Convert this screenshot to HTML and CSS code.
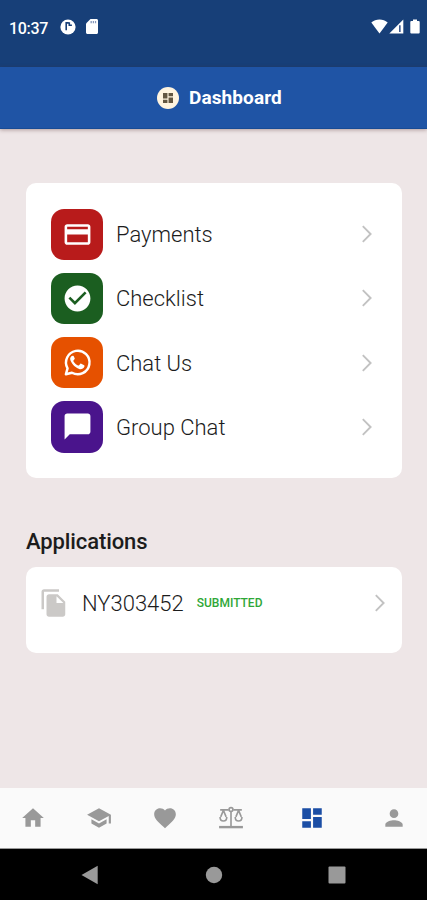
FILE: index.html
```html
<!DOCTYPE html>
<html lang="en">
<head>
<meta charset="utf-8">
<title>Dashboard</title>
<link rel="stylesheet" href="styles.css">
</head>
<body>
<div class="status">
  <span class="time">10:37</span>
  <svg class="st-app" viewBox="0 0 16 16"><circle cx="8" cy="8" r="7.6" fill="#fff"/><path d="M6.200 3.300v8M9.300 3.300v3.700M5.400 3.900h3.200M9.300 6.200h2.600" fill="none" stroke="#173f78" stroke-width="1.600"/></svg>
  <svg class="st-sd" viewBox="4 2 16 20"><path fill="#fff" d="M18 2h-8L4 8v12c0 1.100.9 2 2 2h12c1.100 0 2-.9 2-2V4c0-1.100-.9-2-2-2z"/><path fill="#8698bb" d="M10 4.500h1.800v3H10zM13 4.500h1.800v3H13zM16 4.500h1.500v3H16z"/></svg>
  <span class="spacer"></span>
  <svg class="st-wifi" viewBox="0 0 17 15"><path fill="#fff" d="M.3 3.600C4.800-.6 12.200-.6 16.700 3.600L8.500 14.600z"/></svg>
  <svg class="st-cell" viewBox="0 0 15 15"><path fill="#fff" d="M.3 14.500 14.300.500v14z"/><path fill="#2a4b86" d="M10.100 6.300h1.500v6.700h-1.500z"/></svg>
  <svg class="st-bat" viewBox="0 0 10 15"><path fill="#fff" d="M3 .5h4v1.400h1.700q1 0 1 1v10.600q0 1-1 1H1.300q-1 0-1-1V2.900q0-1 1-1H3z"/></svg>
</div>
<header class="appbar">
  <span class="logo"><svg viewBox="3 3 18 18"><path d="M3 13h8V3H3v10zm0 8h8v-6H3v6zm10 0h8V11h-8v10zm0-18v6h8V3h-8z"/></svg></span>
  <h1>Dashboard</h1>
</header>
<main>
  <section class="card menu">
    <a class="row"><span class="tile red"><svg viewBox="0 0 24 24"><path d="M20 4H4c-1.110 0-1.990.89-1.990 2L2 18c0 1.110.89 2 2 2h16c1.110 0 2-.89 2-2V6c0-1.110-.89-2-2-2zm0 14H4v-6h16v6zm0-10H4V6h16v2z"/></svg></span><span class="label">Payments</span><svg class="chev" viewBox="0 0 10 18"><path d="M.8 1.200 8.600 9 .8 16.800"/></svg></a>
    <a class="row"><span class="tile green"><svg viewBox="0 0 24 24"><path d="M12 2C6.480 2 2 6.480 2 12s4.480 10 10 10 10-4.480 10-10S17.520 2 12 2zm-2 15-5-5 1.410-1.410L10 14.170l7.590-7.590L19 8l-9 9z"/></svg></span><span class="label">Checklist</span><svg class="chev" viewBox="0 0 10 18"><path d="M.8 1.200 8.600 9 .8 16.800"/></svg></a>
    <a class="row"><span class="tile orange"><svg viewBox="0 0 24 24"><path fill="none" stroke="#fff" stroke-width="1.900" stroke-linejoin="round" d="M3 21.100 4.300 16.500A9.100 9.100 0 1 1 7.700 19.900z"/><path d="M9.100 7.200c-.2-.5-.5-.5-.8-.5-.5 0-.9.200-1.200.6-.6.600-.9 1.400-.7 2.400.4 2.400 3.500 6.300 6.900 7.300 1.600.5 3.500-.3 4-1.700.2-.5.200-1-.1-1.200l-2.300-1.200c-.3-.1-.6-.1-.8.200l-.9 1.100c-.2.200-.5.200-.8.100-1.500-.6-2.800-1.800-3.600-3.300-.1-.3 0-.5.200-.7l.8-1c.1-.2.100-.4 0-.6z"/></svg></span><span class="label">Chat Us</span><svg class="chev" viewBox="0 0 10 18"><path d="M.8 1.200 8.600 9 .8 16.800"/></svg></a>
    <a class="row"><span class="tile purple"><svg viewBox="0 0 24 24"><path d="M20 2H4c-1.100 0-2 .9-2 2v18l4-4h14c1.100 0 2-.9 2-2V4c0-1.100-.9-2-2-2z"/></svg></span><span class="label">Group Chat</span><svg class="chev" viewBox="0 0 10 18"><path d="M.8 1.200 8.600 9 .8 16.800"/></svg></a>
  </section>
  <h2>Applications</h2>
  <section class="card app">
    <svg class="copy" viewBox="0 0 24 24"><path d="M16 1H4c-1.100 0-2 .9-2 2v14h2V3h12V1zm-1 4 6 6v10c0 1.100-.9 2-2 2H7.990C6.890 23 6 22.100 6 21l.01-14c0-1.100.89-2 1.990-2h7zm-1 7h5.500L14 6.500V12z"/></svg>
    <span class="number">NY303452</span>
    <span class="state">SUBMITTED</span>
    <span class="spacer"></span>
    <svg class="chev" viewBox="0 0 10 18"><path d="M.8 1.200 8.600 9 .8 16.800"/></svg>
  </section>
</main>
<nav class="tabs">
  <a><svg viewBox="0 0 24 24"><path d="M10 20v-6h4v6h5v-8h3L12 3 2 12h3v8z"/></svg></a>
  <a><svg viewBox="0 0 24 24"><path d="M5 13.180v4L12 21l7-3.820v-4L12 17l-7-3.820zM12 3 1 9l11 6 9-4.910V17h2V9L12 3z"/></svg></a>
  <a><svg viewBox="0 0 24 24"><path d="m12 21.350-1.450-1.320C5.400 15.360 2 12.280 2 8.500 2 5.420 4.420 3 7.500 3c1.740 0 3.410.81 4.500 2.090C13.090 3.810 14.760 3 16.500 3 19.580 3 22 5.420 22 8.500c0 3.780-3.400 6.860-8.550 11.540L12 21.350z"/></svg></a>
  <a><svg viewBox="0 0 24 24"><g fill="none" stroke="#999" stroke-width="1.500"><path d="M2 4.500h7.800M14.200 4.500H22M12 6v14M5 5 2.500 11M5 5l2.500 6M19 5l-2.500 6M19 5l2.500 6"/><circle cx="12" cy="4.200" r="1.800"/><path d="M1.900 11c0 5 6.200 5 6.200 0M15.900 11c0 5 6.200 5 6.200 0"/></g><path d="M1 19.300h22v2.200H1z"/></svg></a>
  <a class="active"><svg viewBox="0 0 24 24"><path d="M3 13h8V3H3v10zm0 8h8v-6H3v6zm10 0h8V11h-8v10zm0-18v6h8V3h-8z"/></svg></a>
  <a><svg viewBox="0 0 24 24"><path d="M12 12c2.210 0 4-1.790 4-4s-1.790-4-4-4-4 1.790-4 4 1.790 4 4 4zm0 2c-2.670 0-8 1.340-8 4v2h16v-2c0-2.660-5.330-4-8-4z"/></svg></a>
</nav>
<footer class="sys">
  <svg viewBox="0 0 18 20"><path d="M.5 10 16.700.8v18.400z"/></svg>
  <svg viewBox="0 0 18 20"><circle cx="9" cy="10" r="8.200"/></svg>
  <svg viewBox="0 0 18 20"><rect x=".5" y="1.500" width="17" height="17" rx="1"/></svg>
</footer>
</body>
</html>
```
FILE: styles.css
```css
* { box-sizing: border-box; }
body {
  margin: 0;
  width: 427px;
  height: 900px;
  overflow: hidden;
  display: flex;
  flex-direction: column;
  background: #eee6e7;
  color: #1c1c1c;
  font-family: Roboto, "Liberation Sans", sans-serif;
}
svg { display: block; flex: none; }
.spacer { flex: 1; }
.status {
  height: 67px;
  flex: none;
  display: flex;
  align-items: flex-start;
  padding: 19px 7px 0 9px;
  background: #173f78;
}
.time {
  width: 50.500px;
  color: #fff;
  font-size: 16px;
  font-weight: 500;
  line-height: 19px;
  letter-spacing: -.3px;
}
.st-app { width: 16px; height: 16px; }
.st-sd { width: 12px; height: 15px; margin: 0 0 0 10px; }
.st-wifi { width: 17px; height: 15px; }
.st-cell { width: 15px; height: 15px; margin-left: 1px; }
.st-bat { width: 10px; height: 15px; margin-left: 6px; }
.appbar {
  height: 62px;
  flex: none;
  display: flex;
  align-items: center;
  padding-left: 157px;
  gap: 10px;
  background: #1f54a5;
  border-bottom: 1px solid #174b95;
  box-shadow: 0 1px 4px rgba(80, 40, 40, .4);
}
.logo {
  width: 22px;
  height: 22px;
  border-radius: 50%;
  display: grid;
  place-items: center;
  background: #fff4df;
}
.logo svg { width: 10px; height: 10px; fill: #625641; }
h1 { margin: 0; color: #fff; font-size: 19px; font-weight: 700; line-height: 22px; letter-spacing: .1px; }
main { flex: 1; padding: 54px 25px 0 26px; }
.card { background: #fff; border-radius: 10px; }
.menu {
  height: 295px;
  padding: 25.500px 30px 0 25.300px;
  display: flex;
  flex-direction: column;
  gap: 12.700px;
}
.row { display: flex; align-items: center; height: 51.500px; }
.tile {
  width: 51.700px;
  height: 51.500px;
  border-radius: 13px;
  display: grid;
  place-items: center;
}
.tile svg { width: 31px; height: 31px; fill: #fff; }
.red { background: #b81b1b; }
.green { background: #1b5e20; }
.orange { background: #e65100; }
.purple { background: #4a148c; }
.label { flex: 1; margin-left: 13px; font-size: 22px; font-weight: 300; line-height: 28px; padding-top: 2px; }
.chev { width: 10px; height: 18px; fill: none; stroke: #c2c2c2; stroke-width: 1.900; }
h2 { margin: 50px 0 11px; font-size: 22px; font-weight: 500; line-height: 28px; letter-spacing: -.1px; }
.app {
  height: 86px;
  display: flex;
  align-items: flex-start;
  padding: 21px 17px 0 13px;
}
.copy { width: 30px; height: 30px; fill: #cbc9c7; }
.number { margin-left: 13px; font-size: 22px; font-weight: 300; line-height: 32px; }
.state { margin-left: 13px; color: #2fa737; font-size: 12px; font-weight: 500; line-height: 30px; }
.app .chev { margin-top: 6px; }
.tabs {
  height: 61px;
  flex: none;
  display: flex;
  align-items: center;
  padding-left: .5px;
  background: #fafafa;
  border-bottom: 1px solid #999;
}
.tabs a { width: 65.800px; display: grid; place-items: center; }
.tabs .active { flex: 1; }
.tabs svg { width: 26px; height: 26px; fill: #999; }
.tabs .active svg { fill: #1b4ea5; }
.sys {
  height: 51px;
  flex: none;
  display: flex;
  justify-content: space-between;
  align-items: center;
  padding: 0 81px;
  background: #000;
}
.sys svg { width: 18px; height: 20px; fill: #999; }
```
